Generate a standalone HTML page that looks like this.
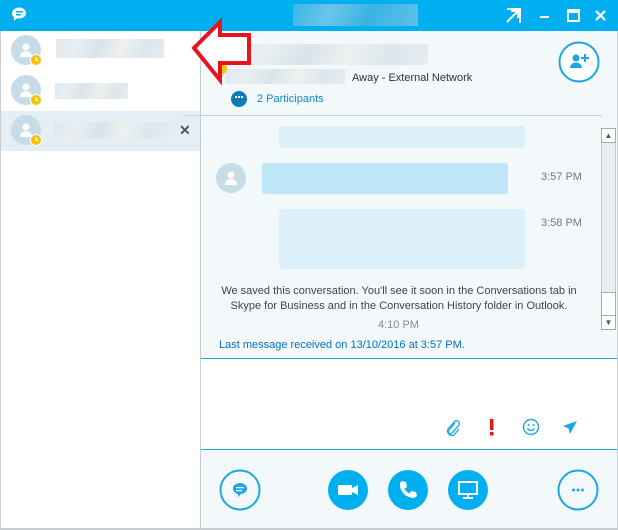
<!DOCTYPE html>
<html><head><meta charset="utf-8"><style>
*{margin:0;padding:0;box-sizing:border-box}
body{width:618px;height:530px;overflow:hidden;font-family:"Liberation Sans",sans-serif;background:#fff;position:relative}
.a{position:absolute}
.blur{background:linear-gradient(115deg,#dfe8ef,#e9eef0 20%,#d8e4ea 40%,#eef0ee 60%,#dbe6ed 80%,#e8ecef)}
.t{font-size:11px;color:#555}
</style></head><body>
<div class="a" style="left:0;top:0;width:618px;height:31px;background:#00aff0"></div>
<svg class="a" style="left:10px;top:6px" width="18" height="18" viewBox="0 0 18 18"><path d="M2 7a7 5.5 0 1 1 5 5.3l-3 2.7v-3.6A5.5 5.5 0 0 1 2 7z" fill="#fff"/><rect x="6" y="5" width="7" height="1.5" fill="#00aff0"/><rect x="6" y="8" width="5" height="1.5" fill="#00aff0"/></svg>
<div class="a" style="left:293px;top:4px;width:125px;height:22px;background:linear-gradient(115deg,#3bb6e6,#6ac6ea 30%,#3ab3e3 60%,#5cc1e8)"></div>
<svg class="a" style="left:506px;top:8px" width="100" height="16" viewBox="0 0 100 16"><path d="M1 1h13v14M1 14L12 3M5 3h7v7" stroke="#fff" stroke-width="2" fill="none"/><rect x="34" y="8" width="9" height="2" fill="#fff"/><rect x="62" y="2" width="11" height="11" stroke="#fff" stroke-width="2" fill="none"/><rect x="62" y="2" width="11" height="3" fill="#fff"/><path d="M90 3l9 9M99 3l-9 9" stroke="#fff" stroke-width="2.2"/></svg>
<div class="a" style="left:200px;top:31px;width:418px;height:499px;background:#f3f8fb;border-left:1px solid #c8cdd2;border-right:1px solid #c8cdd2"></div>
<div class="a" style="left:0;top:111px;width:200px;height:40px;background:#e5eef4"></div>
<div class="a" style="left:0;top:528px;width:618px;height:2px;background:#c8cdd2"></div>
<div class="a" style="left:0;top:31px;width:1px;height:499px;background:#c8cdd2"></div>
<div class="a" style="left:11px;top:35px">
<svg width="34" height="120" viewBox="0 0 34 120">
<g id="av"><circle cx="15" cy="15" r="15" fill="#c7dce6"/><circle cx="15" cy="12" r="3.5" fill="#fff"/><path d="M9 21a6 5 0 0 1 12 0v1H9z" fill="#fff"/><circle cx="25" cy="25" r="5.5" fill="#f6c20b" stroke="#fff" stroke-width="1"/><path d="M25 22v3.3h2.5" stroke="#fff" stroke-width="1.2" fill="none"/></g>
<use href="#av" y="40"/><use href="#av" y="80"/></svg></div>
<div class="a blur" style="left:56px;top:39px;width:108px;height:19px"></div>
<div class="a blur" style="left:55px;top:83px;width:73px;height:16px"></div>
<div class="a blur" style="left:54px;top:122px;width:115px;height:17px"></div>
<div class="a" style="left:179px;top:122px;font-size:14px;font-weight:bold;color:#555">✕</div>
<div class="a blur" style="left:228px;top:44px;width:200px;height:21px"></div>
<div class="a blur" style="left:225px;top:69px;width:120px;height:15px"></div>
<div class="a" style="left:352px;top:72px;font-size:11px;color:#333">Away - External Network</div>
<div class="a" style="left:216px;top:63px;width:11px;height:11px;border-radius:50%;background:#f6c20b"></div>
<div class="a" style="left:231px;top:91px;width:16px;height:16px;border-radius:50%;background:#0a7cb8"></div>
<div class="a" style="left:235px;top:96px;width:8px;height:5px;border-top:2px dotted #fff"></div>
<div class="a" style="left:257px;top:93px;font-size:11px;color:#0a8ad0">2 Participants</div>
<svg class="a" style="left:558px;top:41px" width="42" height="42" viewBox="0 0 42 42"><circle cx="21" cy="21" r="19.5" fill="#fff" stroke="#1aa7e4" stroke-width="2"/><circle cx="18" cy="17" r="3.5" fill="#1aa7e4"/><path d="M12 27a6 5.5 0 0 1 12 0z" fill="#1aa7e4"/><path d="M27 13v8M23 17h8" stroke="#1aa7e4" stroke-width="2"/></svg>
<div class="a" style="left:183px;top:115px;width:419px;height:1px;background:#b9d3e0"></div>
<svg class="a" style="left:185px;top:15px" width="70" height="72" viewBox="185 15 70 72"><path d="M194 48L220 22V35H249V63H220V80z" fill="#fff" stroke="#e8141c" stroke-width="4" stroke-linejoin="miter"/></svg>
<div class="a" style="left:279px;top:126px;width:246px;height:22px;background:#dbf0f8;border-radius:3px"></div>
<svg class="a" style="left:216px;top:163px" width="30" height="30"><circle cx="15" cy="15" r="15" fill="#c7dce6"/><circle cx="15" cy="12" r="3.5" fill="#fff"/><path d="M9 21a6 5 0 0 1 12 0v1H9z" fill="#fff"/></svg>
<div class="a" style="left:262px;top:163px;width:246px;height:31px;background:#bde6f6;border-radius:3px"></div>
<div class="a" style="left:279px;top:209px;width:246px;height:60px;background:#dbf0f8;border-radius:3px"></div>
<div class="a t" style="left:541px;top:171px;color:#777">3:57 PM</div>
<div class="a t" style="left:541px;top:217px;color:#777">3:58 PM</div>
<div class="a" style="left:208px;top:284px;width:382px;text-align:center;font-size:11px;line-height:14.5px;color:#444">We saved this conversation. You'll see it soon in the Conversations tab in Skype for Business and in the Conversation History folder in Outlook.</div>
<div class="a t" style="left:378px;top:319px;color:#888">4:10 PM</div>
<div class="a" style="left:219px;top:339px;font-size:11px;color:#0072c6">Last message received on 13/10/2016 at 3:57 PM.</div>
<div class="a" style="left:601px;top:128px;width:15px;height:202px;background:#e8edf0;border:1px solid #c8c8c8"></div>
<div class="a" style="left:601px;top:128px;width:15px;height:15px;background:#fff;border:1px solid #aaa;font-size:8px;text-align:center;line-height:13px;color:#555">▲</div>
<div class="a" style="left:601px;top:292px;width:15px;height:24px;background:#fff;border:1px solid #aaa"></div>
<div class="a" style="left:601px;top:315px;width:15px;height:15px;background:#fff;border:1px solid #aaa;font-size:8px;text-align:center;line-height:13px;color:#555">▼</div>
<div class="a" style="left:201px;top:358px;width:416px;height:1px;background:#19a8e2"></div>
<div class="a" style="left:201px;top:359px;width:416px;height:90px;background:#fff"></div>
<div class="a" style="left:201px;top:449px;width:416px;height:1px;background:#19a8e2"></div>
<svg class="a" style="left:444px;top:417px" width="140" height="20" viewBox="0 0 140 20"><path d="M11 6l-6 7a2 2 0 0 0 3 3l7-8a3 3 0 0 0-4-4l-7 8a4.5 4.5 0 0 0 6 6l5-6" stroke="#1aa7e4" stroke-width="1.3" fill="none"/><rect x="46" y="2" width="3.5" height="11" fill="#e8141c"/><rect x="46" y="15" width="3.5" height="3.5" fill="#e8141c"/><circle cx="87" cy="10" r="7.5" stroke="#1aa7e4" stroke-width="1.4" fill="none"/><circle cx="84.5" cy="8" r="1" fill="#1aa7e4"/><circle cx="89.5" cy="8" r="1" fill="#1aa7e4"/><path d="M83.5 11.5a4 4 0 0 0 7 0" stroke="#1aa7e4" stroke-width="1.3" fill="none"/><path d="M119 9l14-5-7 13-1.5-5.5z" fill="#1aa7e4"/></svg>
<svg class="a" style="left:219px;top:469px" width="42" height="42"><circle cx="21" cy="21" r="19.5" fill="none" stroke="#1aa7e4" stroke-width="2"/><path d="M14 20a7 5.5 0 1 1 8 5l-3 3v-3a7 5.5 0 0 1-5-5z" fill="#1aa7e4"/><rect x="17" y="18" width="8" height="1.3" fill="#fff"/><rect x="17" y="21" width="6" height="1.3" fill="#fff"/></svg>
<svg class="a" style="left:328px;top:470px" width="40" height="40"><circle cx="20" cy="20" r="20" fill="#00aff0"/><rect x="10" y="15" width="14" height="10" rx="1.5" fill="#fff"/><path d="M24 18l6-3v10l-6-3z" fill="#fff"/></svg>
<svg class="a" style="left:388px;top:470px" width="40" height="40"><circle cx="20" cy="20" r="20" fill="#00aff0"/><path d="M14 11l4 1 1 5-2.5 1.5a11 11 0 0 0 5 5l1.5-2.5 5 1 1 4-3 2c-8 0-15-7-14-15z" fill="#fff"/></svg>
<svg class="a" style="left:448px;top:470px" width="40" height="40"><circle cx="20" cy="20" r="20" fill="#00aff0"/><rect x="11" y="12" width="18" height="12" stroke="#fff" stroke-width="2" fill="none"/><rect x="19" y="24" width="2" height="3" fill="#fff"/><rect x="15" y="27" width="10" height="2" fill="#fff"/></svg>
<svg class="a" style="left:557px;top:469px" width="42" height="42"><circle cx="21" cy="21" r="19.5" fill="none" stroke="#1aa7e4" stroke-width="2"/><circle cx="16.5" cy="21" r="1.5" fill="#1aa7e4"/><circle cx="21" cy="21" r="1.5" fill="#1aa7e4"/><circle cx="25.5" cy="21" r="1.5" fill="#1aa7e4"/></svg>
</body></html>
